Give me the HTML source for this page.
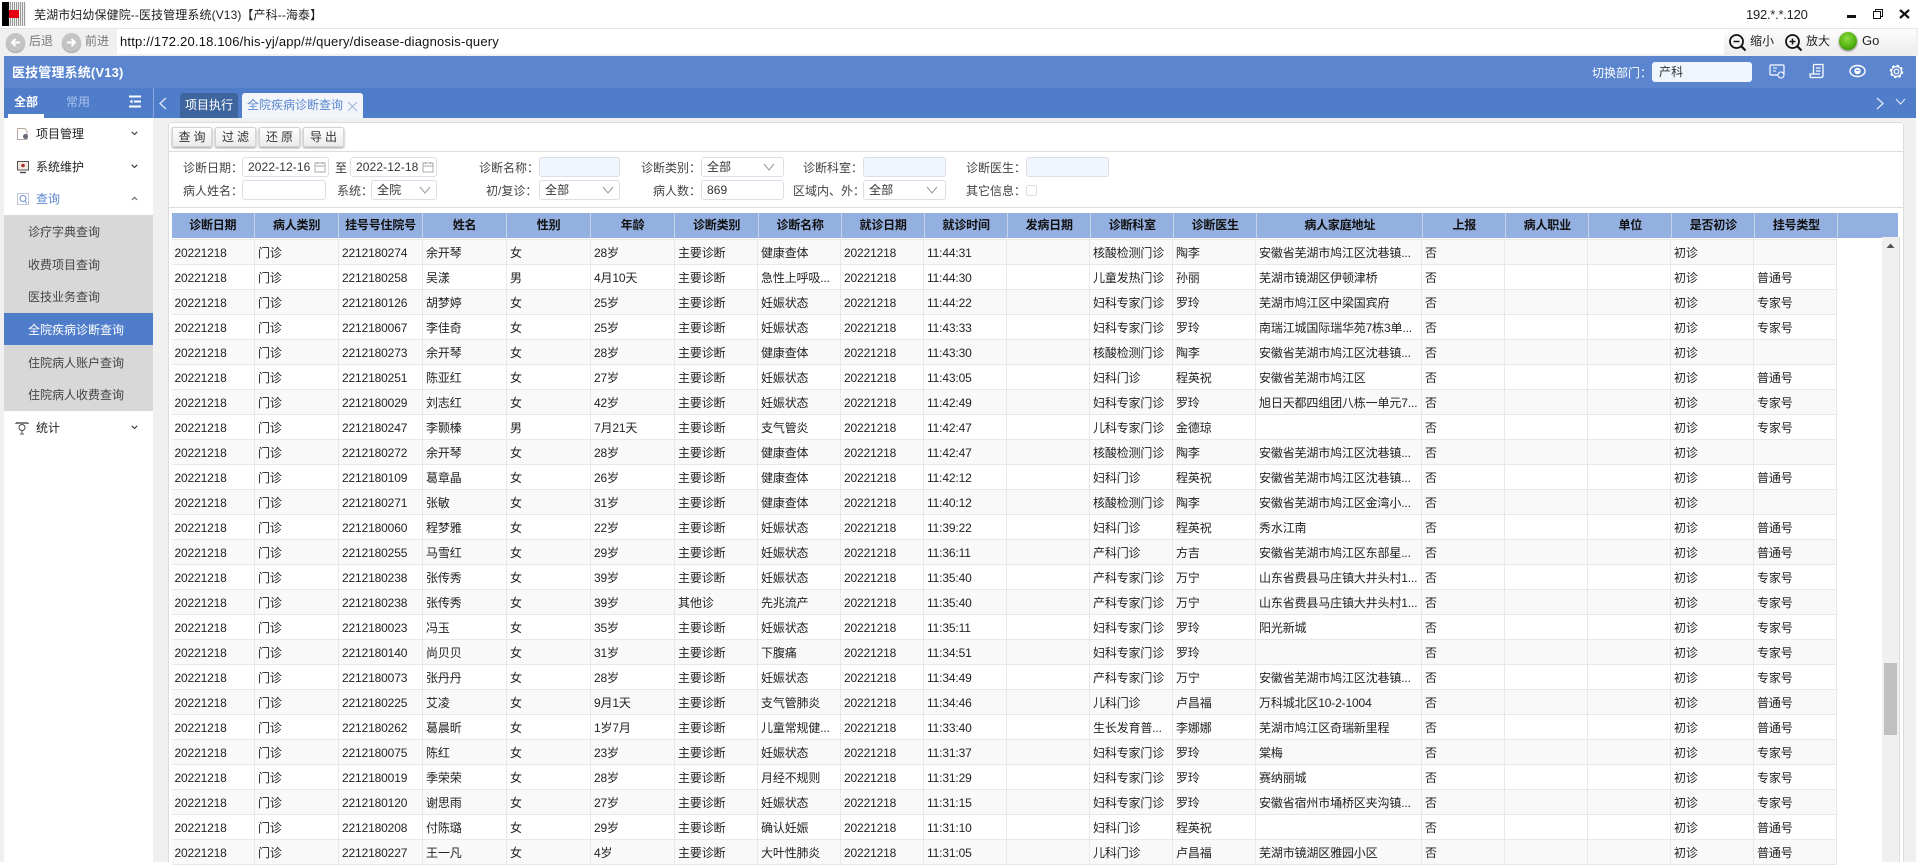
<!DOCTYPE html>
<html lang="zh"><head><meta charset="utf-8"><title>医技管理系统</title>
<style>
html,body{margin:0;padding:0;width:1918px;height:862px;overflow:hidden;background:#fff;font:12px/20px "Liberation Sans","Noto Sans CJK SC",sans-serif;color:#333}
.a{position:absolute;white-space:nowrap}
.b{position:absolute;box-sizing:border-box}
.l{position:absolute;white-space:nowrap;color:#444;text-align:right;height:20px;line-height:20px;margin:1px 0 0 -1px}
.i{position:absolute;box-sizing:border-box;height:20px;border:1px solid #dcdfe6;border-radius:3px;background:#fff;line-height:19px;padding-left:5px;color:#333;letter-spacing:.1px}
.blue{background:#eff6fd}
.btn{position:absolute;top:127px;height:20px;box-sizing:border-box;border:1px solid #d4d4d4;border-radius:2px;background:linear-gradient(#fdfdfd,#ececec);box-shadow:0 1px 2px #999;text-align:center;line-height:18px;letter-spacing:3px;text-indent:3px;color:#333}
.m{left:28px;color:#444}
table{border-collapse:collapse;table-layout:fixed;position:absolute}
#h{left:171.5px;top:212.5px;width:1726.5px;height:25px;background:#94b0e0}
#h th{font-size:12px;font-weight:bold;color:#111;border-right:1px solid #c5d2e8;padding:0;height:25px;line-height:25px;text-align:center;white-space:nowrap;overflow:hidden;letter-spacing:-.2px}
#t{left:171.5px;top:240px;width:1665.5px}
#t td{height:22px;line-height:22px;padding:2px 0 0 3px;border-right:1px solid #e8e8e8;border-bottom:1px solid #e8e8e8;white-space:nowrap;overflow:hidden;color:#222;box-sizing:content-box;letter-spacing:-.15px}
#t tr:nth-child(odd){background:#f9f9f9}
</style></head><body>
<!-- title bar -->
<div class="b" style="left:2px;top:2px;width:24px;height:24px;background:repeating-linear-gradient(90deg,#999 0 1px,#eee 1px 2px)"></div>
<div class="b" style="left:2px;top:2px;width:7px;height:24px;background:#000"></div>
<div class="b" style="left:9px;top:10px;width:10px;height:8px;background:#e60012"></div>
<div class="a" style="left:34px;top:5px;color:#222;letter-spacing:.1px">芜湖市妇幼保健院--医技管理系统(V13)【产科--海泰】</div>
<div class="a" style="left:1746px;top:5px;font-size:13px;color:#222;letter-spacing:-.25px">192.*.*.120</div>
<div class="b" style="left:1847px;top:15px;width:9px;height:3px;background:#111"></div>
<div class="b" style="left:1875px;top:9px;width:8px;height:8px;border:1.5px solid #111"></div>
<div class="b" style="left:1873px;top:11px;width:8px;height:8px;border:1.5px solid #111;background:#fff"></div>
<svg class="a" style="left:1899px;top:9px" width="11" height="10"><path d="M1 1L10 9M10 1L1 9" stroke="#111" stroke-width="2.2"/></svg>
<!-- nav bar -->
<div class="b" style="left:0;top:28px;width:1918px;height:28px;background:#f0f0f0;border-top:1px solid #e6e6e6"></div>
<div class="b" style="left:117px;top:29px;width:1607px;height:25px;background:#fff"></div>
<div class="b" style="left:1724px;top:29px;width:192px;height:26px;background:linear-gradient(#fdfdfd,#ececec)"></div>
<div class="b" style="left:6px;top:33px;width:19px;height:19px;border-radius:50%;background:#c4c4c4;box-shadow:0 1px 1px #999"></div>
<svg class="a" style="left:6px;top:33px" width="19" height="19"><path d="M14 9.5H6M9.5 6L6 9.5L9.5 13" stroke="#fff" stroke-width="2" fill="none"/></svg>
<div class="a" style="left:29px;top:31px;color:#777">后退</div>
<div class="b" style="left:62px;top:33px;width:19px;height:19px;border-radius:50%;background:#c4c4c4;box-shadow:0 1px 1px #999"></div>
<svg class="a" style="left:62px;top:33px" width="19" height="19"><path d="M5 9.5H13M9.5 6L13 9.5L9.5 13" stroke="#fff" stroke-width="2" fill="none"/></svg>
<div class="a" style="left:85px;top:31px;color:#777">前进</div>
<div class="a" style="left:120px;top:32px;font-size:13px;color:#111;letter-spacing:.2px">http://172.20.18.106/his-yj/app/#/query/disease-diagnosis-query</div>
<svg class="a" style="left:1728px;top:33px" width="20" height="20"><circle cx="8.5" cy="8.5" r="6.5" fill="none" stroke="#111" stroke-width="1.8"/><path d="M13 13L17.5 17.5" stroke="#111" stroke-width="2.2"/><path d="M5.5 8.5H11.5" stroke="#111" stroke-width="1.5"/></svg>
<div class="a" style="left:1750px;top:31px;color:#222">缩小</div>
<svg class="a" style="left:1784px;top:33px" width="20" height="20"><circle cx="8.5" cy="8.5" r="6.5" fill="none" stroke="#111" stroke-width="1.8"/><path d="M13 13L17.5 17.5" stroke="#111" stroke-width="2.2"/><path d="M5.5 8.5H11.5M8.5 5.5V11.5" stroke="#111" stroke-width="1.5"/></svg>
<div class="a" style="left:1806px;top:31px;color:#222">放大</div>
<div class="b" style="left:1839px;top:32px;width:18px;height:18px;border-radius:50%;background:radial-gradient(circle at 45% 35%,#8fdc45,#4fae0c 60%,#2f7a05);box-shadow:0 1px 2px #666"></div>
<div class="a" style="left:1862px;top:31px;font-size:13px;color:#222">Go</div>
<!-- header -->
<div class="b" style="left:4px;top:56px;width:1912px;height:32px;background:#5b86cf"></div>
<div class="a" style="left:12px;top:63px;font-size:13px;font-weight:bold;color:#fff;letter-spacing:.15px">医技管理系统(V13)</div>
<div class="a" style="left:1592px;top:63px;color:#fff">切换部门：</div>
<div class="i blue" style="left:1652px;top:62px;width:100px;border-color:#eff6fd;padding-left:6px">产科</div>
<svg class="a" style="left:1769px;top:64px" width="16" height="15"><rect x="1" y="1" width="14" height="10" rx="1" fill="none" stroke="#fff" stroke-width="1.2"/><circle cx="12" cy="11" r="3" fill="#5b86cf" stroke="#fff"/><path d="M4 4H8M4 7H7" stroke="#fff"/></svg>
<svg class="a" style="left:1809px;top:63px" width="16" height="16"><path d="M4.5 1.5H14V12.5Q14 14.5 12 14.5H2Q1 14.5 1 13V11H11M4.5 1.5V11M7 5H11.5M7 8H11.5" fill="none" stroke="#fff" stroke-width="1.3"/></svg>
<svg class="a" style="left:1849px;top:64px" width="17" height="14"><ellipse cx="8.5" cy="7" rx="7.5" ry="5.5" fill="none" stroke="#fff" stroke-width="1.4"/><circle cx="8.5" cy="7" r="3.2" fill="#fff"/><path d="M7 6.5H10" stroke="#5b86cf"/></svg>
<svg class="a" style="left:1889px;top:64px" width="15" height="15"><circle cx="7.5" cy="7.5" r="2.3" fill="none" stroke="#fff" stroke-width="1.2"/><circle cx="7.5" cy="7.5" r="5" fill="none" stroke="#fff" stroke-width="1.2"/><circle cx="7.5" cy="7.5" r="6" fill="none" stroke="#fff" stroke-width="1.6" stroke-dasharray="2.4 2.3"/></svg>
<!-- tab bar -->
<div class="b" style="left:4px;top:88px;width:1912px;height:30px;background:#4f7dca"></div>
<div class="b" style="left:153px;top:88px;width:1px;height:30px;background:#8aa8dc"></div>
<div class="a" style="left:14px;top:92px;color:#fff;font-weight:bold">全部</div>
<div class="a" style="left:66px;top:92px;color:#a9c2ea">常用</div>
<div class="b" style="left:8px;top:114px;width:36px;height:4px;background:#fff"></div>
<svg class="a" style="left:129px;top:95px" width="12" height="13"><path d="M0 1.5H12M0 11.5H12M5 6.5H12" stroke="#fff" stroke-width="2"/><path d="M3.5 4.5L0.5 6.5L3.5 8.5Z" fill="#fff"/></svg>
<svg class="a" style="left:158px;top:96px" width="10" height="15"><path d="M8 2L2 7.5L8 13" stroke="#dfe8f7" stroke-width="1.3" fill="none"/></svg>
<div class="b" style="left:180px;top:93px;width:58px;height:25px;background:#3f659f;border-radius:3px 3px 0 0;color:#fff;text-align:center;line-height:25px">项目执行</div>
<div class="b" style="left:242px;top:93px;width:121px;height:25px;background:#f2f6fb;border-radius:3px 3px 0 0;color:#5b86cf;line-height:25px;padding-left:5px">全院疾病诊断查询</div>
<svg class="a" style="left:347px;top:101px" width="11" height="11"><path d="M1 1L10 10M10 1L1 10" stroke="#9ab2da" stroke-width="1"/></svg>
<svg class="a" style="left:1875px;top:96px" width="10" height="15"><path d="M2 2L8 7.5L2 13" stroke="#dfe8f7" stroke-width="1.3" fill="none"/></svg>
<svg class="a" style="left:1895px;top:98px" width="11" height="8"><path d="M1 1L5.5 6L10 1" stroke="#dfe8f7" stroke-width="1.1" fill="none"/></svg>
<!-- background strips -->
<div class="b" style="left:0;top:56px;width:4px;height:806px;background:#f0f0f0"></div>
<div class="b" style="left:153px;top:118px;width:15px;height:744px;background:#f0f0f0"></div>
<div class="b" style="left:168px;top:122px;width:1736px;height:740px;background:#fff;border:1px solid #dcdcdc;border-bottom:0;border-radius:3px 3px 0 0"></div>
<div class="b" style="left:1904px;top:118px;width:12px;height:744px;background:#f0f0f0"></div>
<div class="b" style="left:153px;top:118px;width:1763px;height:4px;background:#f0f0f0"></div>
<div class="b" style="left:168px;top:151px;width:1735px;height:1px;background:#dcdcdc"></div>
<div class="b" style="left:168px;top:207px;width:1735px;height:1px;background:#dcdcdc"></div>
<!-- sidebar -->
<svg class="a" style="left:16px;top:127px" width="14" height="14"><path d="M1.5 1.5H9L11 4V12.5H1.5Z" fill="none" stroke="#b9a7a0"/><circle cx="9.5" cy="9.5" r="2.5" fill="#667"/></svg>
<div class="a m" style="left:36px;top:124px;color:#222">项目管理</div>
<svg class="a" style="left:131px;top:131px" width="7" height="5"><path d="M0.800 0.800L3.500 3.500L6.200 0.800" stroke="#333" fill="none" stroke-width="1.1"/></svg>
<svg class="a" style="left:16px;top:160px" width="14" height="14"><rect x="1.500" y="1.500" width="11" height="8.500" fill="#f4e8e0" stroke="#555"/><circle cx="7" cy="5.500" r="1.800" fill="#a33"/><path d="M4 12.500H10" stroke="#444" stroke-width="1.400"/></svg>
<div class="a m" style="left:36px;top:157px;color:#222">系统维护</div>
<svg class="a" style="left:131px;top:164px" width="7" height="5"><path d="M0.800 0.800L3.500 3.500L6.200 0.800" stroke="#333" fill="none" stroke-width="1.1"/></svg>
<svg class="a" style="left:16px;top:192px" width="14" height="14"><rect x="1.500" y="1.500" width="11" height="11" fill="none" stroke="#c4c6de"/><circle cx="7" cy="6.500" r="3" fill="none" stroke="#6f8fc9"/><path d="M9 9L11 11.500" stroke="#6f8fc9"/></svg>
<div class="a m" style="left:36px;top:189px;color:#5b86cf">查询</div>
<svg class="a" style="left:131px;top:196px" width="7" height="5"><path d="M0.800 4L3.500 1.300L6.200 4" stroke="#666" fill="none" stroke-width="1.1"/></svg>
<div class="b" style="left:4px;top:215px;width:149px;height:196px;background:#d8d8d8"></div>
<div class="a m" style="top:222px">诊疗字典查询</div>
<div class="a m" style="top:255px">收费项目查询</div>
<div class="a m" style="top:287px">医技业务查询</div>
<div class="b" style="left:4px;top:313px;width:149px;height:32px;background:#4f7dca"></div>
<div class="a m" style="top:320px;color:#fff">全院疾病诊断查询</div>
<div class="a m" style="top:353px">住院病人账户查询</div>
<div class="a m" style="top:385px">住院病人收费查询</div>
<svg class="a" style="left:15px;top:421px" width="14" height="14"><path d="M1 2H13M1 2V3M13 2V3" stroke="#555" stroke-width="1.500"/><circle cx="7" cy="6.500" r="3" fill="none" stroke="#444"/><path d="M7 10V13M5 13H9" stroke="#777" stroke-width="1.300"/></svg>
<div class="a m" style="left:36px;top:418px;color:#222">统计</div>
<svg class="a" style="left:131px;top:425px" width="7" height="5"><path d="M0.800 0.800L3.500 3.500L6.200 0.800" stroke="#333" fill="none" stroke-width="1.1"/></svg>
<!-- toolbar -->
<div class="btn" style="left:172px;width:40px">查询</div>
<div class="btn" style="left:215px;width:41px">过滤</div>
<div class="btn" style="left:259px;width:41px">还原</div>
<div class="btn" style="left:303px;width:41px">导出</div>
<!-- form -->
<div class="l" style="left:184px;top:157px">诊断日期：</div>
<div class="i" style="left:242px;top:157px;width:87px">2022-12-16</div>
<svg class="a" style="left:314px;top:161px" width="12" height="12"><rect x="1" y="2" width="10" height="9" fill="none" stroke="#aaa"/><path d="M1 5H11M3.500 1V3M8.500 1V3" stroke="#aaa"/></svg>
<div class="a" style="left:335px;top:158px;color:#333">至</div>
<div class="i" style="left:350px;top:157px;width:87px">2022-12-18</div>
<svg class="a" style="left:422px;top:161px" width="12" height="12"><rect x="1" y="2" width="10" height="9" fill="none" stroke="#aaa"/><path d="M1 5H11M3.500 1V3M8.500 1V3" stroke="#aaa"/></svg>
<div class="l" style="left:480px;top:157px">诊断名称：</div>
<div class="i blue" style="left:539px;top:157px;width:81px"></div>
<div class="l" style="left:642px;top:157px">诊断类别：</div>
<div class="i" style="left:701px;top:157px;width:83px">全部</div>
<div class="l" style="left:804px;top:157px">诊断科室：</div>
<div class="i blue" style="left:863px;top:157px;width:83px"></div>
<div class="l" style="left:967px;top:157px">诊断医生：</div>
<div class="i blue" style="left:1026px;top:157px;width:83px"></div>
<div class="l" style="left:184px;top:180px">病人姓名：</div>
<div class="i" style="left:242px;top:180px;width:84px"></div>
<div class="l" style="left:338px;top:180px">系统：</div>
<div class="i" style="left:371px;top:180px;width:66px">全院</div>
<div class="l" style="left:487px;top:180px">初/复诊：</div>
<div class="i" style="left:539px;top:180px;width:81px">全部</div>
<div class="l" style="left:654px;top:180px">病人数：</div>
<div class="i" style="left:701px;top:180px;width:83px">869</div>
<div class="l" style="left:794px;top:180px">区域内、外：</div>
<div class="i" style="left:863px;top:180px;width:83px">全部</div>
<div class="l" style="left:967px;top:180px">其它信息：</div>
<div class="b" style="left:1026px;top:185px;width:11px;height:11px;border:1px solid #dcdfe6;border-radius:2px"></div>
<svg class="a" style="left:763px;top:163px" width="12" height="8"><path d="M1 1L6 7L11 1" stroke="#999" fill="none"/></svg>
<svg class="a" style="left:419px;top:186px" width="12" height="8"><path d="M1 1L6 7L11 1" stroke="#999" fill="none"/></svg>
<svg class="a" style="left:602px;top:186px" width="12" height="8"><path d="M1 1L6 7L11 1" stroke="#999" fill="none"/></svg>
<svg class="a" style="left:926px;top:186px" width="12" height="8"><path d="M1 1L6 7L11 1" stroke="#999" fill="none"/></svg>
<!-- table header -->
<table id="h"><colgroup><col style="width:83px"><col style="width:84px"><col style="width:84px"><col style="width:84px"><col style="width:84px"><col style="width:84px"><col style="width:84px"><col style="width:83px"><col style="width:83px"><col style="width:83px"><col style="width:83px"><col style="width:83px"><col style="width:83px"><col style="width:166px"><col style="width:83px"><col style="width:83px"><col style="width:83px"><col style="width:83px"><col style="width:83px"><col style="width:60px"></colgroup><tr><th>诊断日期</th><th>病人类别</th><th>挂号号住院号</th><th>姓名</th><th>性别</th><th>年龄</th><th>诊断类别</th><th>诊断名称</th><th>就诊日期</th><th>就诊时间</th><th>发病日期</th><th>诊断科室</th><th>诊断医生</th><th>病人家庭地址</th><th>上报</th><th>病人职业</th><th>单位</th><th>是否初诊</th><th>挂号类型</th><th style="border:0"></th></tr></table>
<div class="b" style="left:171px;top:239px;width:1666px;height:1px;background:#e8e8e8"></div>
<!-- body -->
<table id="t"><colgroup><col style="width:83px"><col style="width:84px"><col style="width:84px"><col style="width:84px"><col style="width:84px"><col style="width:84px"><col style="width:83px"><col style="width:83px"><col style="width:83px"><col style="width:83px"><col style="width:83px"><col style="width:83px"><col style="width:83px"><col style="width:166px"><col style="width:83px"><col style="width:83px"><col style="width:83px"><col style="width:83px"><col style="width:83px"></colgroup>
<tr><td>20221218</td><td>门诊</td><td>2212180274</td><td>余开琴</td><td>女</td><td>28岁</td><td>主要诊断</td><td>健康查体</td><td>20221218</td><td>11:44:31</td><td></td><td>核酸检测门诊</td><td>陶李</td><td>安徽省芜湖市鸠江区沈巷镇...</td><td>否</td><td></td><td></td><td>初诊</td><td></td></tr>
<tr><td>20221218</td><td>门诊</td><td>2212180258</td><td>吴漾</td><td>男</td><td>4月10天</td><td>主要诊断</td><td>急性上呼吸...</td><td>20221218</td><td>11:44:30</td><td></td><td>儿童发热门诊</td><td>孙丽</td><td>芜湖市镜湖区伊顿津桥</td><td>否</td><td></td><td></td><td>初诊</td><td>普通号</td></tr>
<tr><td>20221218</td><td>门诊</td><td>2212180126</td><td>胡梦婷</td><td>女</td><td>25岁</td><td>主要诊断</td><td>妊娠状态</td><td>20221218</td><td>11:44:22</td><td></td><td>妇科专家门诊</td><td>罗玲</td><td>芜湖市鸠江区中梁国宾府</td><td>否</td><td></td><td></td><td>初诊</td><td>专家号</td></tr>
<tr><td>20221218</td><td>门诊</td><td>2212180067</td><td>李佳奇</td><td>女</td><td>25岁</td><td>主要诊断</td><td>妊娠状态</td><td>20221218</td><td>11:43:33</td><td></td><td>妇科专家门诊</td><td>罗玲</td><td>南瑞江城国际瑞华苑7栋3单...</td><td>否</td><td></td><td></td><td>初诊</td><td>专家号</td></tr>
<tr><td>20221218</td><td>门诊</td><td>2212180273</td><td>余开琴</td><td>女</td><td>28岁</td><td>主要诊断</td><td>健康查体</td><td>20221218</td><td>11:43:30</td><td></td><td>核酸检测门诊</td><td>陶李</td><td>安徽省芜湖市鸠江区沈巷镇...</td><td>否</td><td></td><td></td><td>初诊</td><td></td></tr>
<tr><td>20221218</td><td>门诊</td><td>2212180251</td><td>陈亚红</td><td>女</td><td>27岁</td><td>主要诊断</td><td>妊娠状态</td><td>20221218</td><td>11:43:05</td><td></td><td>妇科门诊</td><td>程英祝</td><td>安徽省芜湖市鸠江区</td><td>否</td><td></td><td></td><td>初诊</td><td>普通号</td></tr>
<tr><td>20221218</td><td>门诊</td><td>2212180029</td><td>刘志红</td><td>女</td><td>42岁</td><td>主要诊断</td><td>妊娠状态</td><td>20221218</td><td>11:42:49</td><td></td><td>妇科专家门诊</td><td>罗玲</td><td>旭日天都四组团八栋一单元7...</td><td>否</td><td></td><td></td><td>初诊</td><td>专家号</td></tr>
<tr><td>20221218</td><td>门诊</td><td>2212180247</td><td>李颢榛</td><td>男</td><td>7月21天</td><td>主要诊断</td><td>支气管炎</td><td>20221218</td><td>11:42:47</td><td></td><td>儿科专家门诊</td><td>金德琼</td><td></td><td>否</td><td></td><td></td><td>初诊</td><td>专家号</td></tr>
<tr><td>20221218</td><td>门诊</td><td>2212180272</td><td>余开琴</td><td>女</td><td>28岁</td><td>主要诊断</td><td>健康查体</td><td>20221218</td><td>11:42:47</td><td></td><td>核酸检测门诊</td><td>陶李</td><td>安徽省芜湖市鸠江区沈巷镇...</td><td>否</td><td></td><td></td><td>初诊</td><td></td></tr>
<tr><td>20221218</td><td>门诊</td><td>2212180109</td><td>葛章晶</td><td>女</td><td>26岁</td><td>主要诊断</td><td>健康查体</td><td>20221218</td><td>11:42:12</td><td></td><td>妇科门诊</td><td>程英祝</td><td>安徽省芜湖市鸠江区沈巷镇...</td><td>否</td><td></td><td></td><td>初诊</td><td>普通号</td></tr>
<tr><td>20221218</td><td>门诊</td><td>2212180271</td><td>张敏</td><td>女</td><td>31岁</td><td>主要诊断</td><td>健康查体</td><td>20221218</td><td>11:40:12</td><td></td><td>核酸检测门诊</td><td>陶李</td><td>安徽省芜湖市鸠江区金湾小...</td><td>否</td><td></td><td></td><td>初诊</td><td></td></tr>
<tr><td>20221218</td><td>门诊</td><td>2212180060</td><td>程梦雅</td><td>女</td><td>22岁</td><td>主要诊断</td><td>妊娠状态</td><td>20221218</td><td>11:39:22</td><td></td><td>妇科门诊</td><td>程英祝</td><td>秀水江南</td><td>否</td><td></td><td></td><td>初诊</td><td>普通号</td></tr>
<tr><td>20221218</td><td>门诊</td><td>2212180255</td><td>马雪红</td><td>女</td><td>29岁</td><td>主要诊断</td><td>妊娠状态</td><td>20221218</td><td>11:36:11</td><td></td><td>产科门诊</td><td>方吉</td><td>安徽省芜湖市鸠江区东部星...</td><td>否</td><td></td><td></td><td>初诊</td><td>普通号</td></tr>
<tr><td>20221218</td><td>门诊</td><td>2212180238</td><td>张传秀</td><td>女</td><td>39岁</td><td>主要诊断</td><td>妊娠状态</td><td>20221218</td><td>11:35:40</td><td></td><td>产科专家门诊</td><td>万宁</td><td>山东省费县马庄镇大井头村1...</td><td>否</td><td></td><td></td><td>初诊</td><td>专家号</td></tr>
<tr><td>20221218</td><td>门诊</td><td>2212180238</td><td>张传秀</td><td>女</td><td>39岁</td><td>其他诊</td><td>先兆流产</td><td>20221218</td><td>11:35:40</td><td></td><td>产科专家门诊</td><td>万宁</td><td>山东省费县马庄镇大井头村1...</td><td>否</td><td></td><td></td><td>初诊</td><td>专家号</td></tr>
<tr><td>20221218</td><td>门诊</td><td>2212180023</td><td>冯玉</td><td>女</td><td>35岁</td><td>主要诊断</td><td>妊娠状态</td><td>20221218</td><td>11:35:11</td><td></td><td>妇科专家门诊</td><td>罗玲</td><td>阳光新城</td><td>否</td><td></td><td></td><td>初诊</td><td>专家号</td></tr>
<tr><td>20221218</td><td>门诊</td><td>2212180140</td><td>尚贝贝</td><td>女</td><td>31岁</td><td>主要诊断</td><td>下腹痛</td><td>20221218</td><td>11:34:51</td><td></td><td>妇科专家门诊</td><td>罗玲</td><td></td><td>否</td><td></td><td></td><td>初诊</td><td>专家号</td></tr>
<tr><td>20221218</td><td>门诊</td><td>2212180073</td><td>张丹丹</td><td>女</td><td>28岁</td><td>主要诊断</td><td>妊娠状态</td><td>20221218</td><td>11:34:49</td><td></td><td>产科专家门诊</td><td>万宁</td><td>安徽省芜湖市鸠江区沈巷镇...</td><td>否</td><td></td><td></td><td>初诊</td><td>专家号</td></tr>
<tr><td>20221218</td><td>门诊</td><td>2212180225</td><td>艾凌</td><td>女</td><td>9月1天</td><td>主要诊断</td><td>支气管肺炎</td><td>20221218</td><td>11:34:46</td><td></td><td>儿科门诊</td><td>卢昌福</td><td>万科城北区10-2-1004</td><td>否</td><td></td><td></td><td>初诊</td><td>普通号</td></tr>
<tr><td>20221218</td><td>门诊</td><td>2212180262</td><td>葛晨昕</td><td>女</td><td>1岁7月</td><td>主要诊断</td><td>儿童常规健...</td><td>20221218</td><td>11:33:40</td><td></td><td>生长发育普...</td><td>李娜娜</td><td>芜湖市鸠江区奇瑞新里程</td><td>否</td><td></td><td></td><td>初诊</td><td>普通号</td></tr>
<tr><td>20221218</td><td>门诊</td><td>2212180075</td><td>陈红</td><td>女</td><td>23岁</td><td>主要诊断</td><td>妊娠状态</td><td>20221218</td><td>11:31:37</td><td></td><td>妇科专家门诊</td><td>罗玲</td><td>棠梅</td><td>否</td><td></td><td></td><td>初诊</td><td>专家号</td></tr>
<tr><td>20221218</td><td>门诊</td><td>2212180019</td><td>季荣荣</td><td>女</td><td>28岁</td><td>主要诊断</td><td>月经不规则</td><td>20221218</td><td>11:31:29</td><td></td><td>妇科专家门诊</td><td>罗玲</td><td>赛纳丽城</td><td>否</td><td></td><td></td><td>初诊</td><td>专家号</td></tr>
<tr><td>20221218</td><td>门诊</td><td>2212180120</td><td>谢思雨</td><td>女</td><td>27岁</td><td>主要诊断</td><td>妊娠状态</td><td>20221218</td><td>11:31:15</td><td></td><td>妇科专家门诊</td><td>罗玲</td><td>安徽省宿州市埇桥区夹沟镇...</td><td>否</td><td></td><td></td><td>初诊</td><td>专家号</td></tr>
<tr><td>20221218</td><td>门诊</td><td>2212180208</td><td>付陈璐</td><td>女</td><td>29岁</td><td>主要诊断</td><td>确认妊娠</td><td>20221218</td><td>11:31:10</td><td></td><td>妇科门诊</td><td>程英祝</td><td></td><td>否</td><td></td><td></td><td>初诊</td><td>普通号</td></tr>
<tr><td>20221218</td><td>门诊</td><td>2212180227</td><td>王一凡</td><td>女</td><td>4岁</td><td>主要诊断</td><td>大叶性肺炎</td><td>20221218</td><td>11:31:05</td><td></td><td>儿科门诊</td><td>卢昌福</td><td>芜湖市镜湖区雅园小区</td><td>否</td><td></td><td></td><td>初诊</td><td>普通号</td></tr>
</table>
<!-- scrollbar -->
<div class="b" style="left:1882px;top:237px;width:17px;height:625px;background:#f0f0f0"></div>
<div class="b" style="left:1899px;top:237px;width:1px;height:625px;background:#dcdcdc"></div>
<svg class="a" style="left:1886px;top:243px" width="9" height="6"><path d="M0.500 5L4.500 0.500L8.500 5Z" fill="#555"/></svg>
<div class="b" style="left:1884px;top:663px;width:13px;height:72px;background:#c0c0c0"></div>
</body></html>
